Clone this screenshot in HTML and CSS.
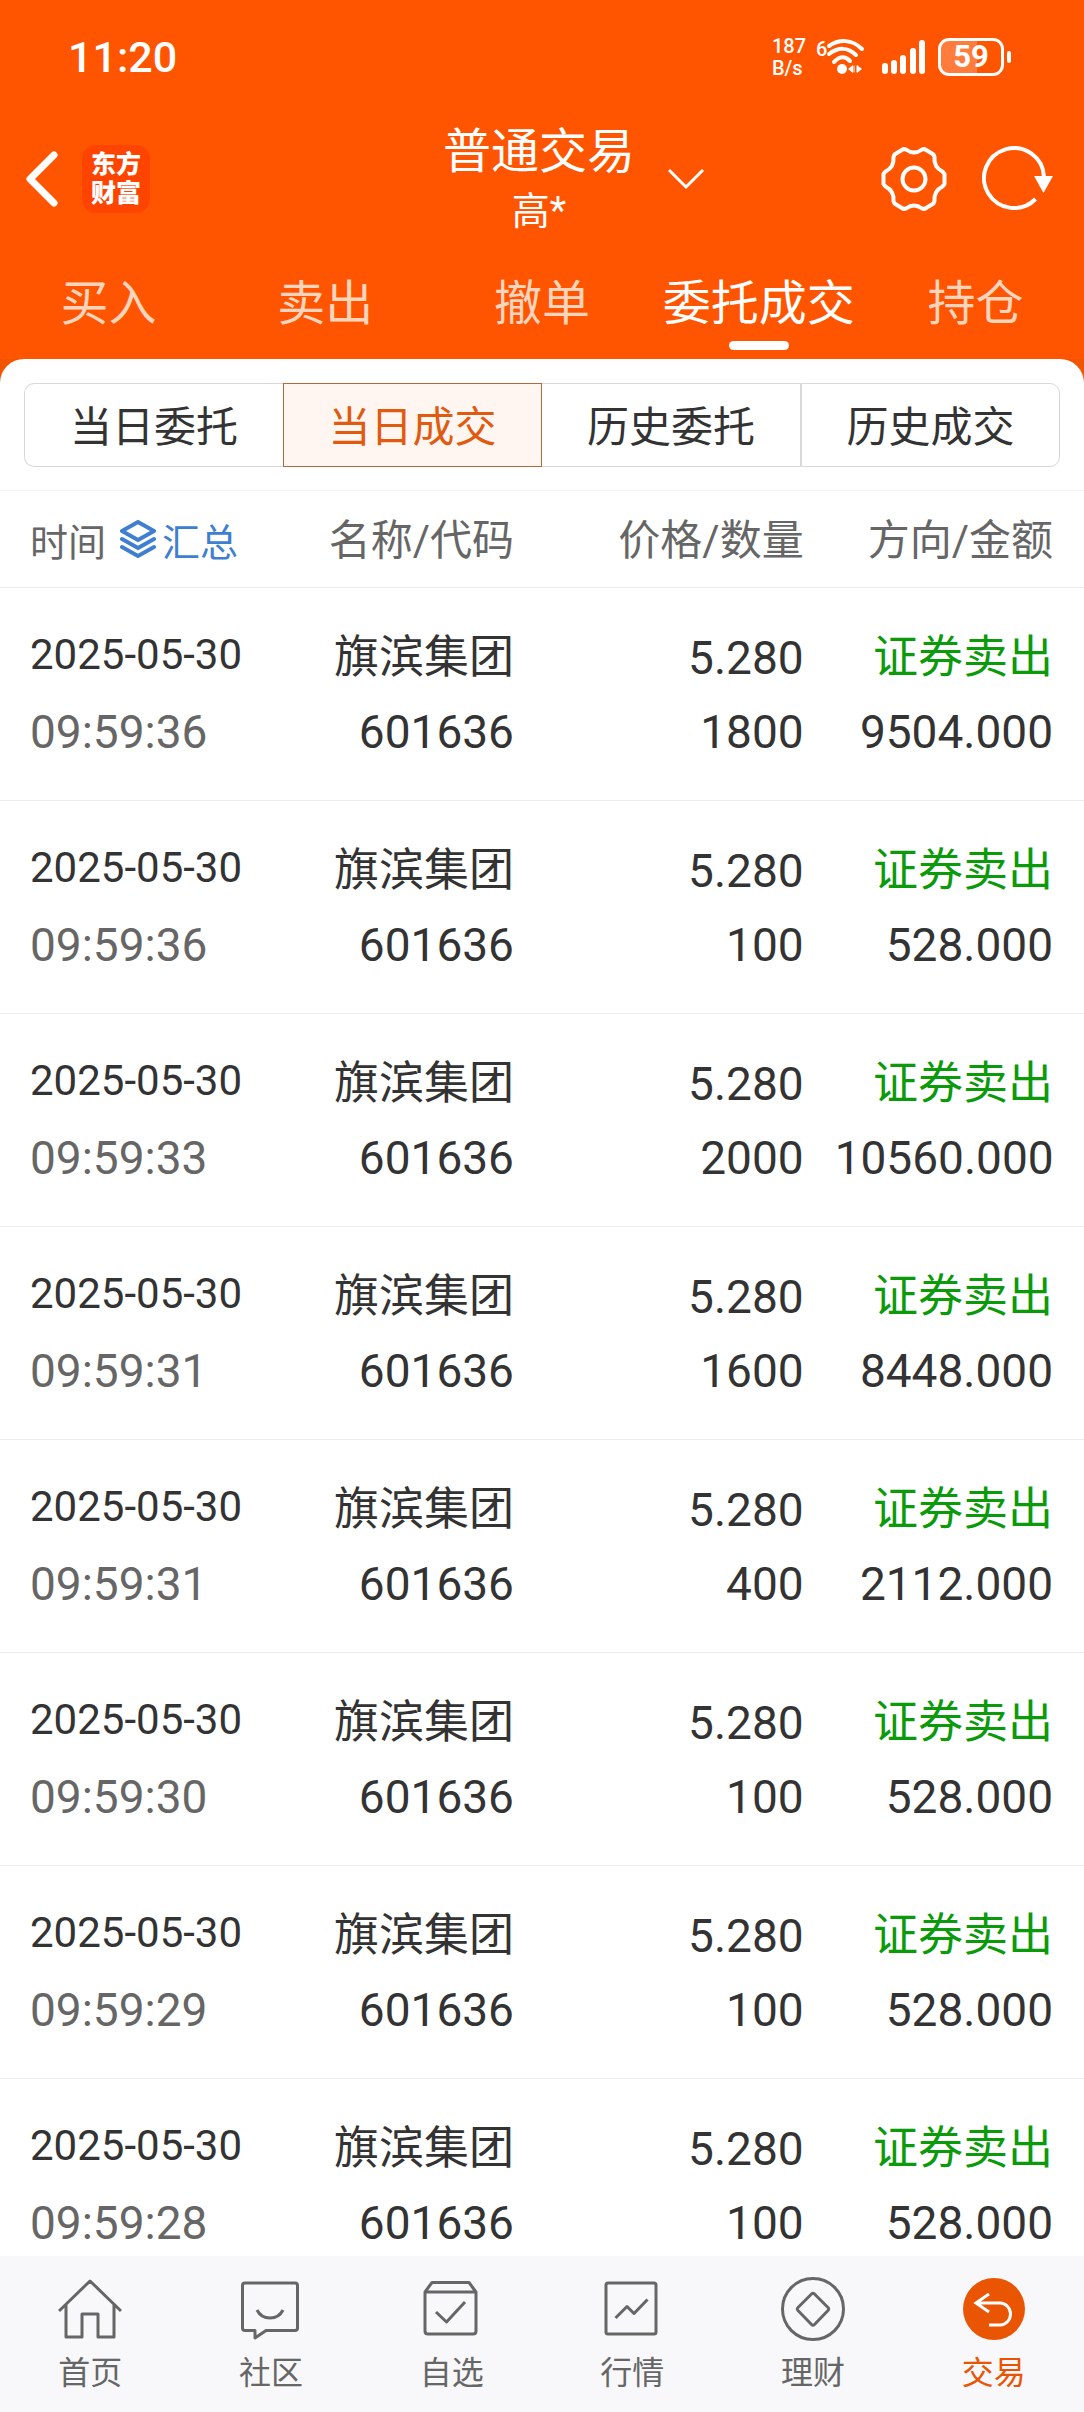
FILE: index.html
```html
<!DOCTYPE html>
<html lang="zh-CN">
<head>
    <meta charset="UTF-8">
    <meta name="viewport" content="width=device-width, initial-scale=1.0">
    <title>普通交易 - 当日成交</title>
    <link rel="stylesheet" href="styles.css">
</head>
<body>
<header class="header">
    <!-- Status bar -->
    <div class="status-bar">
        <span class="clock">11:20</span>
        <div class="status-icons">
            <div class="net-speed">
                <span>187</span>
                <span>B/s</span>
            </div>
            <svg class="wifi" width="50" height="38" viewBox="0 0 50 38" fill="none" stroke="#fff" stroke-linecap="round">
                <text x="0" y="18" class="wifi-gen">6</text>
                <path d="M13 8C23 1 36 1 46 11" stroke-width="4"/>
                <path d="M13 16C22 9 32 9 40 17" stroke-width="4"/>
                <path d="M18 24C24 18 29 18 34 23" stroke-width="4"/>
                <circle cx="26" cy="31" r="5" fill="#fff" stroke="none"/>
                <path d="M32 31l5-4v8zM46 31l-5-4v8z" fill="#fff" stroke="none"/>
                <path d="M38 28v6M41 28v6" stroke-width="1"/>
            </svg>
            <svg width="44" height="34" viewBox="0 0 44 34" fill="#fff">
                <rect x="0" y="23" width="6" height="11" rx="3"/>
                <rect x="9" y="20" width="6" height="14" rx="3"/>
                <rect x="18" y="15" width="6" height="19" rx="3"/>
                <rect x="28" y="8" width="6" height="26" rx="3"/>
                <rect x="37" y="0" width="6" height="34" rx="3"/>
            </svg>
            <span class="battery">59</span>
        </div>
    </div>

    <!-- Title bar -->
    <div class="title-bar">
        <div class="title-left">
            <button class="icon-btn" type="button" aria-label="返回">
                <svg width="36" height="60" viewBox="0 0 36 60" fill="none" stroke="#fff" stroke-width="7" stroke-linecap="round" stroke-linejoin="round">
                    <path d="M30 6L6 30L30 54"/>
                </svg>
            </button>
            <a class="logo" href="#">东方<br>财富</a>
        </div>
        <div class="title">
            <h1>普通交易</h1>
            <p>高*</p>
        </div>
        <div class="title-right">
            <button class="icon-btn switch-account" type="button" aria-label="切换账户">
                <svg width="38" height="22" viewBox="0 0 38 22" fill="none" stroke="#fff" stroke-width="3">
                    <path d="M2 2L19 19L36 2"/>
                </svg>
            </button>
            <button class="icon-btn" type="button" aria-label="设置">
                <svg width="68" height="68" viewBox="0 0 68 68" fill="none" stroke="#fff" stroke-width="4" stroke-linejoin="round">
                    <path d="M23.500 4L26 4.500Q34 10.500 42 4.500L44.500 4L53.500 9.500L54.500 12Q53.500 22 62.500 26.500L64.500 29V39L62.500 41.500Q53.500 46 54.500 56L53.500 58.500L44.500 64L42 63.500Q34 57.500 26 63.500L23.500 64L14.500 58.500L13.500 56Q14.500 46 5.500 41.500L3.500 39V29L5.500 26.500Q14.500 22 13.500 12L14.500 9.500Z"/>
                    <circle cx="34" cy="34" r="11.500"/>
                </svg>
            </button>
            <button class="icon-btn" type="button" aria-label="刷新">
                <svg width="72" height="68" viewBox="0 0 72 68" fill="none" stroke="#fff" stroke-width="4">
                    <path d="M62 32A30 30 0 1 0 53.500 54"/>
                    <path d="M52 31H71L61.500 48Z" fill="#fff" stroke="none"/>
                </svg>
            </button>
        </div>
    </div>

    <!-- Main tabs -->
    <nav class="main-tabs">
        <a href="#">买入</a>
        <a href="#">卖出</a>
        <a href="#">撤单</a>
        <a href="#" class="active">委托成交</a>
        <a href="#">持仓</a>
    </nav>
</header>

<main class="content">
    <div class="sheet">
        <div class="segments">
            <button type="button">当日委托</button>
            <button type="button" class="active">当日成交</button>
            <button type="button">历史委托</button>
            <button type="button">历史成交</button>
        </div>

        <table class="deals">
            <thead>
            <tr>
                <th>
                    <div class="time-head">
                        时间
                        <button class="summary-btn" type="button">
                            <svg width="36" height="38" viewBox="0 0 36 38" fill="none" stroke="currentColor" stroke-width="4" stroke-linejoin="round" stroke-linecap="round">
                                <path d="M18 2L34 11L18 20L2 11Z"/>
                                <path d="M2 19L18 28L34 19"/>
                                <path d="M2 27L18 36L34 27"/>
                            </svg>汇总
                        </button>
                    </div>
                </th>
                <th>名称/代码</th>
                <th>价格/数量</th>
                <th>方向/金额</th>
            </tr>
            </thead>
            <tbody>
            <tr>
                <td><span class="date">2025-05-30</span><span class="time">09:59:36</span></td>
                <td><span class="name">旗滨集团</span><span>601636</span></td>
                <td><span>5.280</span><span>1800</span></td>
                <td><span class="name sell">证券卖出</span><span>9504.000</span></td>
            </tr>
            <tr>
                <td><span class="date">2025-05-30</span><span class="time">09:59:36</span></td>
                <td><span class="name">旗滨集团</span><span>601636</span></td>
                <td><span>5.280</span><span>100</span></td>
                <td><span class="name sell">证券卖出</span><span>528.000</span></td>
            </tr>
            <tr>
                <td><span class="date">2025-05-30</span><span class="time">09:59:33</span></td>
                <td><span class="name">旗滨集团</span><span>601636</span></td>
                <td><span>5.280</span><span>2000</span></td>
                <td><span class="name sell">证券卖出</span><span>10560.000</span></td>
            </tr>
            <tr>
                <td><span class="date">2025-05-30</span><span class="time">09:59:31</span></td>
                <td><span class="name">旗滨集团</span><span>601636</span></td>
                <td><span>5.280</span><span>1600</span></td>
                <td><span class="name sell">证券卖出</span><span>8448.000</span></td>
            </tr>
            <tr>
                <td><span class="date">2025-05-30</span><span class="time">09:59:31</span></td>
                <td><span class="name">旗滨集团</span><span>601636</span></td>
                <td><span>5.280</span><span>400</span></td>
                <td><span class="name sell">证券卖出</span><span>2112.000</span></td>
            </tr>
            <tr>
                <td><span class="date">2025-05-30</span><span class="time">09:59:30</span></td>
                <td><span class="name">旗滨集团</span><span>601636</span></td>
                <td><span>5.280</span><span>100</span></td>
                <td><span class="name sell">证券卖出</span><span>528.000</span></td>
            </tr>
            <tr>
                <td><span class="date">2025-05-30</span><span class="time">09:59:29</span></td>
                <td><span class="name">旗滨集团</span><span>601636</span></td>
                <td><span>5.280</span><span>100</span></td>
                <td><span class="name sell">证券卖出</span><span>528.000</span></td>
            </tr>
            <tr>
                <td><span class="date">2025-05-30</span><span class="time">09:59:28</span></td>
                <td><span class="name">旗滨集团</span><span>601636</span></td>
                <td><span>5.280</span><span>100</span></td>
                <td><span class="name sell">证券卖出</span><span>528.000</span></td>
            </tr>
            </tbody>
        </table>
    </div>
</main>

<!-- Bottom navigation -->
<nav class="bottom-nav">
    <a href="#">
        <svg viewBox="0 0 64 64">
            <path d="M1 34L32 4L63 34M8 28V60H24V37H40V60H56V28"/>
        </svg>
        首页
    </a>
    <a href="#">
        <svg viewBox="0 0 64 64">
            <path d="M6 6H56Q58.500 6 58.500 8.500V51Q58.500 53.500 56 53.500H27L16 61V53.500H6Q3.500 53.500 3.500 51V8.500Q3.500 6 6 6Z"/>
            <path d="M18 33Q22 41 31 41T44 33"/>
        </svg>
        社区
    </a>
    <a href="#">
        <svg viewBox="0 0 64 64">
            <path d="M5 15L12 5.500H49L56 15V54Q56 57 53 57H8Q5 57 5 54ZM5 15H56"/>
            <path d="M16 35L26.500 45L45 25"/>
        </svg>
        自选
    </a>
    <a href="#">
        <svg viewBox="0 0 64 64">
            <rect x="6" y="6" width="50" height="51" rx="2"/>
            <path d="M15.500 41L27 29.500L34 36.500L47.500 22.500"/>
        </svg>
        行情
    </a>
    <a href="#">
        <svg viewBox="0 0 64 64">
            <circle cx="32" cy="32" r="30.500"/>
            <path d="M30.500 17L17 30.500Q15.500 32 17 33.500L30.500 47.500Q32 49 33.500 47.500L47 33.500Q48.500 32 47 30.500L33.500 17Q32 15.500 30.500 17Z"/>
        </svg>
        理财
    </a>
    <a href="#" class="active">
        <svg viewBox="0 0 64 64">
            <circle cx="32" cy="32" r="31" class="disc"/>
            <path d="M27 17L14 26L27 35M14 26H38A10.500 11 0 0 1 38 48H27" class="arrow"/>
        </svg>
        交易
    </a>
</nav>
</body>
</html>
```
FILE: styles.css
```css
:root {
    --brand: #ff5500;
    --accent: #ea5504;
    --text: #333333;
    --muted: #666666;
    --border: #d8d8dc;
    --line: #ececec;
    --sell: #0a9a0a;
    --link: #3f7fd0;
}

* {
    box-sizing: border-box;
}

body {
    margin: 0;
    height: 100vh;
    display: flex;
    flex-direction: column;
    font-family: Roboto, "Noto Sans CJK SC", sans-serif;
    background: #fff;
    color: var(--text);
}

button {
    font-family: inherit;
    color: inherit;
    background: none;
    border: none;
    padding: 0;
    cursor: pointer;
}

a {
    color: inherit;
    text-decoration: none;
}

svg {
    display: block;
}

.header {
    background: var(--brand);
    color: #fff;
    flex: none;
}

.status-bar {
    display: flex;
    align-items: center;
    justify-content: space-between;
    height: 114px;
    padding: 0 80px 0 68px;
}

.clock {
    font-size: 43px;
    font-weight: 500;
}

.status-icons {
    display: flex;
    align-items: center;
}

.net-speed {
    display: flex;
    flex-direction: column;
    font-size: 20px;
    line-height: 22px;
    font-weight: 500;
    margin-right: 10px;
}

.wifi {
    margin-right: 16px;
}

.wifi-gen {
    font-size: 20px;
    font-weight: 500;
    fill: #fff;
    stroke: none;
}

.battery {
    position: relative;
    width: 66px;
    height: 38px;
    margin-left: 12px;
    border: 3px solid #fff;
    border-radius: 11px;
    background: linear-gradient(to right, #ff7c3c 60%, transparent 60%);
    font-size: 31px;
    line-height: 32px;
    font-weight: 700;
    text-align: center;
}

.battery::after {
    content: "";
    position: absolute;
    right: -10px;
    top: 10px;
    width: 4px;
    height: 12px;
    border-radius: 2px;
    background: #fff;
}

.title-bar {
    display: grid;
    grid-template-columns: 1fr auto 1fr;
    align-items: center;
    padding: 4px 30px 0 24px;
}

.title-left,
.title-right {
    display: flex;
    align-items: center;
}

.title-left {
    gap: 22px;
}

.title-right {
    gap: 34px;
    padding-left: 32px;
}

.switch-account {
    margin-right: auto;
}

.logo {
    width: 68px;
    height: 68px;
    padding-top: 5px;
    border-radius: 14px;
    background: #ff4400;
    font-size: 25px;
    line-height: 29px;
    font-weight: 900;
    text-align: center;
}

.title {
    padding-top: 3px;
    text-align: center;
}

.title h1 {
    margin: 0;
    font-size: 48px;
    line-height: 62px;
    font-weight: 400;
}

.title p {
    margin: 0;
    font-size: 38px;
    line-height: 56px;
}

.main-tabs {
    display: grid;
    grid-template-columns: repeat(5, 1fr);
    padding-bottom: 9px;
}

.main-tabs a {
    display: flex;
    flex-direction: column;
    align-items: center;
    padding-top: 28px;
    font-size: 48px;
    line-height: 74px;
    color: #ffd4bd;
}

.main-tabs a::after {
    content: "";
    width: 60px;
    height: 9px;
    border-radius: 5px;
}

.main-tabs a.active {
    color: #fff;
}

.main-tabs a.active::after {
    background: #fff;
}

.content {
    flex: 1;
    min-height: 0;
    display: flex;
    background: #f25500;
}

.sheet {
    flex: 1;
    overflow-y: auto;
    scrollbar-width: none;
    background: #fff;
    border-radius: 24px 24px 0 0;
}

.segments {
    display: grid;
    grid-template-columns: repeat(4, 1fr);
    margin: 24px 24px 23px;
}

.segments button {
    height: 84px;
    padding-bottom: 4px;
    border: 1px solid var(--border);
    font-size: 42px;
}

.segments button:first-child {
    border-radius: 10px 0 0 10px;
    border-right: none;
}

.segments button:last-child {
    border-radius: 0 10px 10px 0;
}

.segments button:nth-child(3) {
    border-left: none;
}

.segments button.active {
    color: #e05a10;
    background: #fff5f1;
    border-color: #b5683c;
}

.deals {
    width: 100%;
    table-layout: fixed;
    border-collapse: separate;
    border-spacing: 0;
    border-top: 1px solid #f5f5f5;
}

.deals th,
.deals td {
    padding: 0 31px 0 0;
    border-bottom: 1px solid var(--line);
    text-align: right;
    white-space: nowrap;
}

.deals th {
    height: 97px;
    padding-bottom: 6px;
    color: var(--muted);
    font-size: 42px;
    font-weight: 400;
}

.deals th:first-child,
.deals td:first-child {
    width: 26%;
    padding: 0 0 0 30px;
    text-align: left;
}

.deals th:nth-child(2),
.deals td:nth-child(2) {
    width: 24%;
    padding-right: 28px;
}

.deals th:nth-child(3) {
    width: 27%;
}

.deals td {
    height: 213px;
    font-size: 46px;
    line-height: 74px;
}

.deals td span {
    display: block;
}

.deals td span:first-child {
    padding-top: 2px;
}

.deals .name {
    font-size: 45px;
}

.deals .date {
    font-size: 42px;
    line-height: 68px;
    margin-bottom: 6px;
}

.deals .time {
    color: var(--muted);
}

.deals .sell {
    color: var(--sell);
}

.time-head {
    display: flex;
    align-items: center;
    gap: 14px;
    font-size: 38px;
}

.summary-btn {
    display: flex;
    align-items: center;
    gap: 6px;
    font-size: 38px;
    color: var(--link);
}

.bottom-nav {
    display: grid;
    grid-template-columns: repeat(6, 1fr);
    flex: none;
    height: 156px;
    padding-top: 21px;
    background: #f8f8fb;
}

.bottom-nav a {
    display: flex;
    flex-direction: column;
    align-items: center;
    gap: 10px;
    font-size: 32px;
    line-height: 44px;
    color: var(--muted);
}

.bottom-nav svg {
    width: 64px;
    height: 64px;
    fill: none;
    stroke: currentColor;
    stroke-width: 3;
    stroke-linejoin: round;
}

.bottom-nav .active {
    color: var(--accent);
}

.bottom-nav .disc {
    fill: var(--accent);
    stroke: none;
}

.bottom-nav .arrow {
    stroke: #fff;
    stroke-linejoin: miter;
}
```
